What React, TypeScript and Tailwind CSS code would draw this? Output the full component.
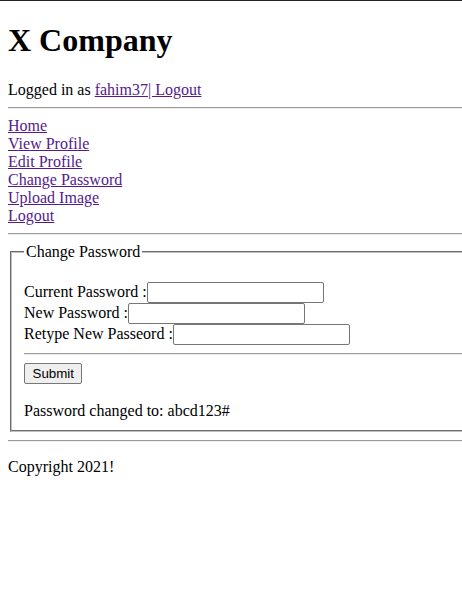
import React from "react";

const Hr = ({ className = "" }: { className?: string }) => (
  <div
    className={`h-0 border-t border-b border-t-[#9a9a9a] border-b-[#eeeeee] ${className}`}
  />
);

const linkCls = "text-[#551a8b] underline";

export default function App() {
  const links = ["Home", "View Profile", "Edit Profile", "Change Password", "Upload Image", "Logout"];
  return (
    <div className="w-[462px] h-[592px] overflow-hidden bg-white">
      <div className="w-[540px] font-['Liberation_Serif','Times_New_Roman',serif] text-[16px] leading-[18px] text-black">
        <div className="h-px bg-[#202020]" />
        <div className="px-2">
          <h1 className="mt-[20.44px] text-[32px] font-bold leading-[38px]">X Company</h1>
          <div className="mt-[21.44px]">
            Logged in as <a className={linkCls} href="#">fahim37| Logout</a>
          </div>
          <Hr className="my-2" />
          <div className="flex flex-col items-start">
            {links.map((l) => (
              <a key={l} className={linkCls} href="#">
                {l}
              </a>
            ))}
          </div>
          <Hr className="my-2" />
          <fieldset className="mx-[2px] border-2 [border-style:groove] border-[#c0c0c0] px-3 pt-[5.6px] pb-[10px]">
            <legend className="px-[2px]">Change Password</legend>
            <div className="mt-[16px] flex flex-col">
              {[
                "Current Password :",
                "New Password :",
                "Retype New Passeord :",
              ].map((label) => (
                <div key={label} className="flex items-baseline h-[21px]">
                  <span>{label}</span>
                  <input
                    type="text"
                    className="w-[177px] h-[21px] border border-[#767676] rounded-[2px] px-[2px] py-[1px] text-[13.33px] font-['Liberation_Sans',Arial,sans-serif] bg-white"
                  />
                </div>
              ))}
            </div>
            <Hr className="my-2" />
            <div>
              <button className="h-[21px] px-[7.5px] border border-[#767676] rounded-[2px] bg-[#efefef] text-[13.33px] leading-none font-['Liberation_Sans',Arial,sans-serif] text-black">
                Submit
              </button>
            </div>
            <div className="mt-[18px]">Password changed to: abcd123#</div>
          </fieldset>
          <Hr className="my-2" />
          <div className="mt-4">Copyright 2021!</div>
        </div>
      </div>
    </div>
  );
}
